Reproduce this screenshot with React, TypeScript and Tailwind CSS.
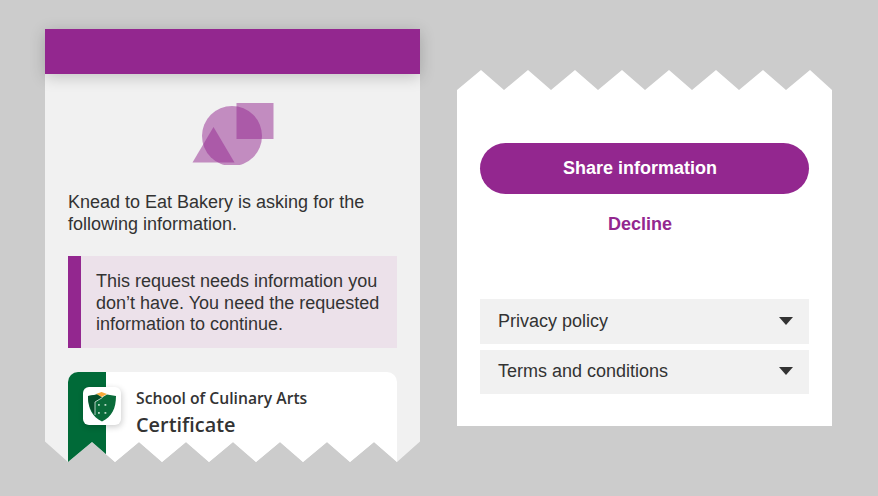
const logo = (
  <svg width="84" height="62" viewBox="0 0 84 62" className="block">
    <circle cx="42" cy="33" r="30" fill="#93278f" fillOpacity="0.5" />
    <rect x="46.500" y="0" width="37" height="36" fill="#93278f" fillOpacity="0.5" />
    <polygon points="23.500,24 44.500,59.500 2.500,59.500" fill="#93278f" fillOpacity="0.5" />
  </svg>
);

function Caret() {
  return (
    <svg width="16" height="9" viewBox="0 0 16 9" className="block">
      <polygon points="1,0 15,0 8,8" fill="#333333" />
    </svg>
  );
}

function Shield() {
  return (
    <svg width="30" height="32" viewBox="0 0 30 32" className="block">
      <polygon points="9,4 14.500,2 20,4 14.500,7" fill="#f7a839" />
      <path d="M1 6 L10 4.500 L15 7.500 L20 4.500 L29 6 C29 18 25 27 15 31.500 C5 27 1 18 1 6 Z" fill="#0a6b3a" />
      <path d="M1 6 L10 4.500 L15 7.500 L8 12 L8 25 C3.500 20 1 14 1 6 Z" fill="#064d2b" />
      <path d="M15.500 7.500 L8 12 L8 25" fill="none" stroke="#ffffff" strokeWidth="0.700" />
      <g fill="#b7d8c4">
        <rect x="11" y="14" width="1.800" height="1.800" />
        <rect x="17.500" y="14" width="1.800" height="1.800" />
        <rect x="11" y="22" width="1.800" height="1.800" />
        <rect x="17.500" y="22" width="1.800" height="1.800" />
      </g>
    </svg>
  );
}

function AccordionRow({ label }: { label: string }) {
  return (
    <div className="flex h-[44.500px] items-center justify-between bg-[#f1f1f1] pl-[18px] pr-[15px] text-[18px] text-[#333333]">
      <span>{label}</span>
      <Caret />
    </div>
  );
}

export default function App() {
  return (
    <div className="flex h-[496px] w-[878px] items-start gap-[37px] overflow-hidden bg-[#cccccc] pl-[45px] pt-[29px] font-['Liberation_Sans',Arial,sans-serif]">
      <div className="flex h-[433px] w-[375px] flex-col bg-[#f1f1f1] [clip-path:polygon(-20px_-20px,395px_-20px,395px_80px,375px_80px,375px_412.500px,352px_433px,329px_413px,305px_433px,282px_413px,258px_433px,235px_413px,211px_433px,188px_413px,164px_433px,141px_413px,117px_433px,94px_413px,70px_433px,47px_413px,23px_433px,0px_412.500px,0px_80px,-20px_80px)]">
        <div className="h-[45px] shrink-0 bg-[#93278f] shadow-[0_3px_16px_rgba(0,0,0,0.2)]" />
        <div className="flex flex-1 flex-col px-[23px] pt-[29px] text-[#333333]">
          <div className="flex justify-center">
            <div className="mr-[1px]">{logo}</div>
          </div>
          <p className="mt-[26px] text-[18px] leading-[22px]">
            Knead to Eat Bakery is asking for the following information.
          </p>
          <div className="mt-[21px] flex h-[92px] w-[329px] shrink-0 border-l-[13px] border-[#93278f] bg-[#ece1ea] pl-[15px] pr-[10px] pt-[15px] text-[18px] leading-[21.500px]">
            <p>This request needs information you don’t have. You need the requested information to continue.</p>
          </div>
          <div className="mt-[24px] flex h-[120px] w-[329px] shrink-0 overflow-hidden rounded-[10px] bg-white font-['Open_Sans',sans-serif]">
            <div className="h-full w-[38px] shrink-0 bg-[#006a38]" />
            <div className="relative -ml-[23px] mt-[15px] flex h-[38px] w-[38px] shrink-0 items-center justify-center rounded-[6px] bg-white shadow-[1px_2px_6px_rgba(0,0,0,0.2)]">
              <Shield />
            </div>
            <div className="ml-[15px] pt-[15px]">
              <p className="text-[15.700px] font-semibold leading-[22px] text-[#333333]">School of Culinary Arts</p>
              <p className="mt-[2px] text-[19.900px] font-semibold leading-[28px] text-[#333333]">Certificate</p>
            </div>
          </div>
        </div>
      </div>

      <div className="mt-[41px] flex h-[356px] w-[375px] flex-col bg-white px-[23px] pt-[73px] [clip-path:polygon(0px_20px,24px_0px,47px_20px,71px_0px,94px_20px,118px_0px,141px_20px,165px_0px,188px_20px,212px_0px,235px_20px,259px_0px,282px_20px,306px_0px,329px_20px,353px_0px,375px_20px,375px_356px,0px_356px)]">
        <button className="h-[51px] w-[329px] shrink-0 rounded-full bg-[#93278f] pr-[9px] text-[18px] font-bold text-white">
          Share information
        </button>
        <p className="mt-[20px] pr-[9px] text-center text-[18px] font-bold leading-[20px] text-[#93278f]">Decline</p>
        <div className="mt-[65px] flex flex-col gap-[6px]">
          <AccordionRow label="Privacy policy" />
          <AccordionRow label="Terms and conditions" />
        </div>
      </div>
    </div>
  );
}
